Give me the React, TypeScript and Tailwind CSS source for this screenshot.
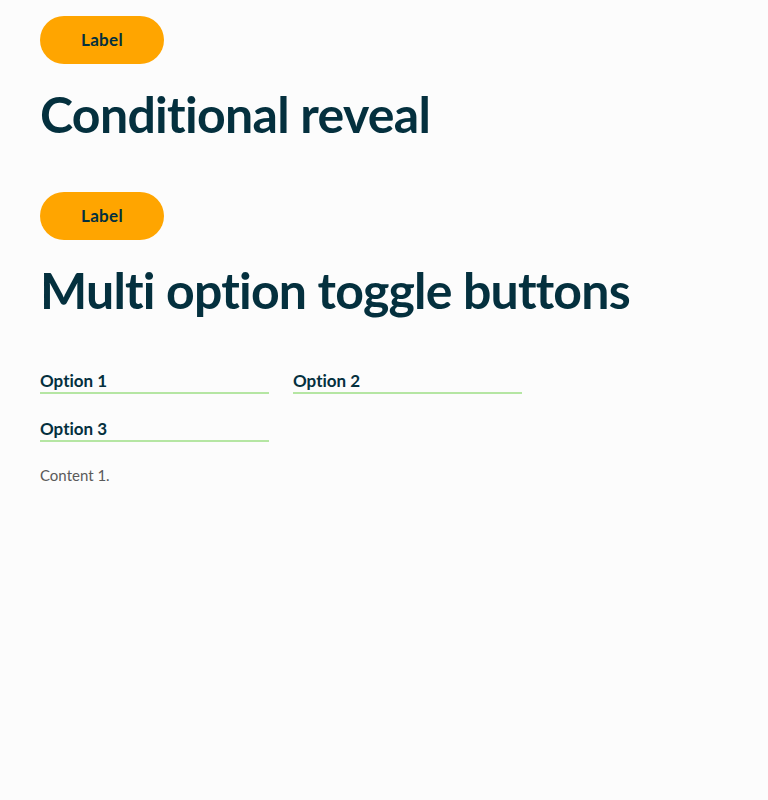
import React, { useState } from "react";

const font = { fontFamily: "Lato, 'Noto Sans', sans-serif", fontVariantLigatures: "none" as const };

function Label() {
  return (
    <button className="h-12 w-[124px] rounded-full bg-[#ffa500] text-[17px] font-bold tracking-[0.3px] text-[#04303e]">
      Label
    </button>
  );
}

function Option({ text, onClick }: { text: string; onClick: () => void }) {
  return (
    <button
      onClick={onClick}
      className="h-6 w-[229px] border-b-2 border-[#b5e6a3] text-left text-[17px] font-bold leading-[22px] text-[#04303e]"
    >
      {text}
    </button>
  );
}

export default function App() {
  const [sel, setSel] = useState(0);
  return (
    <div className="min-h-[800px] bg-[#fcfcfc] px-10 pt-4" style={font}>
      <Label />
      <h1 className="mt-5 text-[50px] font-bold leading-[60px] tracking-[-0.7px] text-[#04303e]">Conditional reveal</h1>
      <div className="mt-12">
        <Label />
      </div>
      <h1 className="mt-5 text-[50px] font-bold leading-[60px] tracking-[-0.8px] text-[#04303e]">Multi option toggle buttons</h1>
      <div className="mt-[50px] flex w-[500px] flex-wrap gap-x-6 gap-y-6">
        {["Option 1", "Option 2", "Option 3"].map((o, i) => (
          <Option key={o} text={o} onClick={() => setSel(i)} />
        ))}
      </div>
      <p className="mt-[22px] text-[15px] text-[#5a5a5a]">Content {sel + 1}.</p>
    </div>
  );
}
